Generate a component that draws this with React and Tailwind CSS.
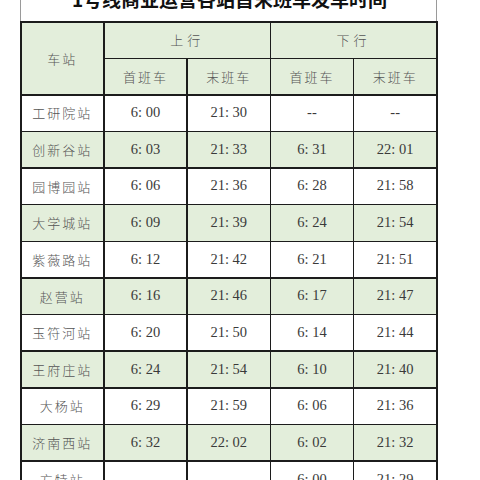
import React from "react";

const rows = [
  ["工研院站", "6: 00", "21: 30", "--", "--"],
  ["创新谷站", "6: 03", "21: 33", "6: 31", "22: 01"],
  ["园博园站", "6: 06", "21: 36", "6: 28", "21: 58"],
  ["大学城站", "6: 09", "21: 39", "6: 24", "21: 54"],
  ["紫薇路站", "6: 12", "21: 42", "6: 21", "21: 51"],
  ["赵营站", "6: 16", "21: 46", "6: 17", "21: 47"],
  ["玉符河站", "6: 20", "21: 50", "6: 14", "21: 44"],
  ["王府庄站", "6: 24", "21: 54", "6: 10", "21: 40"],
  ["大杨站", "6: 29", "21: 59", "6: 06", "21: 36"],
  ["济南西站", "6: 32", "22: 02", "6: 02", "21: 32"],
  ["方特站", "", "", "6: 00", "21: 29"],
];

const head =
  "bg-[#e3eedb] flex items-center justify-center text-[13px] tracking-[2px] font-light text-[#555] font-['Noto_Sans_CJK_SC',sans-serif]";

export default function App() {
  return (
    <div className="w-[480px] h-[480px] overflow-hidden bg-white">
      <div className="ml-[20px] w-[417px] h-[480px] border-l border-r border-[#9a9a9a]">
        <div className="h-[21px] overflow-hidden">
          <div className="mt-[-11px] text-center text-[19px] leading-[20px] font-bold text-[#111] pl-[2px] font-['Noto_Sans_CJK_SC',sans-serif]">
            1号线商业运营各站首末班车发车时间
          </div>
        </div>
        <div className="grid grid-cols-5 gap-[1.5px] bg-[#1c1c1c] p-[1.5px] pr-[2px] w-[418px] -ml-[1px]">
          <div className={"row-span-2 " + head}>车站</div>
          <div className={"col-span-2 h-[35px] tracking-[4px] " + head}>上行</div>
          <div className={"col-span-2 h-[35px] tracking-[4px] " + head}>下行</div>
          {["首班车", "末班车", "首班车", "末班车"].map((t, i) => (
            <div key={i} className={"h-[35px] " + head}>
              {t}
            </div>
          ))}
          {rows.map((r, ri) => {
            const bg = ri % 2 === 1 ? "bg-[#e3eedb]" : "bg-white";
            return r.map((c, ci) => (
              <div
                key={ri + "-" + ci}
                className={
                  "h-[35.15px] flex items-center justify-center " +
                  bg +
                  (ci === 0
                    ? " text-[13px] tracking-[2px] font-light text-[#555] font-['Noto_Sans_CJK_SC',sans-serif]"
                    : " text-[14.5px] text-[#3a3a3a] font-['Liberation_Serif','Noto_Sans_CJK_SC',serif]")
                }
              >
                {c}
              </div>
            ));
          })}
        </div>
      </div>
    </div>
  );
}
